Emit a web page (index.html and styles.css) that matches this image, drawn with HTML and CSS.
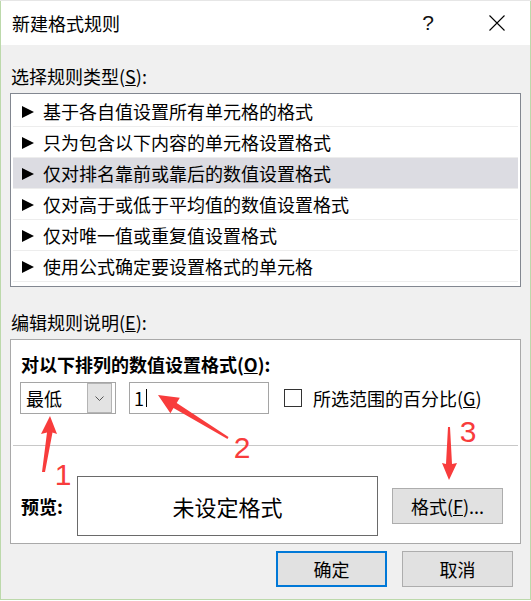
FILE: index.html
```html
<!DOCTYPE html>
<html lang="zh-CN">
<head>
<meta charset="utf-8">
<title>新建格式规则</title>
<link rel="stylesheet" href="styles.css">
</head>
<body>
<div class="topstrip"></div>
<div class="window">
  <div class="titlebar">
    <span class="title">新建格式规则</span>
    <span class="help">?</span>
    <svg class="close" width="16" height="16" viewBox="0 0 16 16"><path d="M0.5 0.5L15.5 15.5M15.5 0.5L0.5 15.5" stroke="#000" stroke-width="1.1" fill="none"/></svg>
  </div>
  <div class="content">
    <div class="label">选择规则类型(<u>S</u>):</div>
    <ul class="listbox">
      <li><span class="tri"></span>基于各自值设置所有单元格的格式</li>
      <li><span class="tri"></span>只为包含以下内容的单元格设置格式</li>
      <li class="sel"><span class="tri"></span>仅对排名靠前或靠后的数值设置格式</li>
      <li><span class="tri"></span>仅对高于或低于平均值的数值设置格式</li>
      <li><span class="tri"></span>仅对唯一值或重复值设置格式</li>
      <li><span class="tri"></span>使用公式确定要设置格式的单元格</li>
    </ul>
    <div class="label label2">编辑规则说明(<u>E</u>):</div>
    <div class="editbox">
      <div class="heading">对以下排列的数值设置格式(<u>O</u>):</div>
      <div class="controls">
        <div class="combo">
          <span class="combo-text">最低</span>
          <span class="combo-btn"><svg width="9" height="5" viewBox="0 0 9 5"><path d="M0.5 0.5L4.5 4.5L8.5 0.5" stroke="#555" stroke-width="1" fill="none"/></svg></span>
        </div>
        <div class="input"><span class="val">1</span><span class="caret"></span></div>
        <div class="check"><span class="box"></span><span>所选范围的百分比(<u>G</u>)</span></div>
      </div>
      <div class="sep"></div>
      <div class="preview-row">
        <span class="preview-label">预览:</span>
        <div class="preview">未设定格式</div>
        <div class="btn fmt">格式(<u>F</u>)...</div>
      </div>
    </div>
    <div class="actions">
      <div class="btn ok">确定</div>
      <div class="btn">取消</div>
    </div>
  </div>
</div>
<svg class="annot" width="531" height="601" viewBox="0 0 531 601">
  <g fill="#f83c3c">
    <polygon points="50,416 57,434 52.5,432.5 45,472 42,472 47,432.5 41,434"/>
    <polygon points="158,395 179.8,397.8 176.7,402.9 228.5,437.1 227.5,438.9 173.5,408.1 170.4,413.2"/>
    <polygon points="449,480 442,463 446,464 448,427 450,427 452,464 457,463"/>
    <text class="num" x="63" y="485" text-anchor="middle">1</text>
    <text class="num" x="242" y="458" text-anchor="middle">2</text>
    <text class="num" x="468" y="442" text-anchor="middle">3</text>
  </g>
</svg>
</body>
</html>
```

FILE: styles.css
```css
html, body {
  margin: 0;
  padding: 0;
}
body {
  position: relative;
  width: 531px;
  height: 601px;
  overflow: hidden;
  background: #ffffff;
  font-family: "Noto Sans CJK SC", "Noto Sans", sans-serif;
  font-size: 18px;
  color: #000;
}
.topstrip {
  height: 1px;
  background: #e6e6e6;
}
.window {
  width: 531px;
  height: 599px;
  box-sizing: border-box;
  border-left: 1px solid #bcd9ab;
  border-right: 1px solid #bcd9ab;
  border-bottom: 1px solid #bcd9ab;
  display: flex;
  flex-direction: column;
}
.titlebar {
  height: 44px;
  flex: none;
  background: #fff;
  display: flex;
  align-items: center;
  padding-left: 11px;
}
.title {
  line-height: 24px;
}
.help {
  margin-left: auto;
  margin-right: 55px;
  font-family: "Liberation Sans", sans-serif;
  font-size: 21px;
  line-height: 24px;
  color: #111;
}
.close {
  margin-right: 25px;
  display: block;
}
.content {
  flex: 1;
  background: #f0f0f0;
  padding: 19px 9px 0;
}
.label {
  line-height: 24px;
  height: 24px;
  padding-left: 1px;
}
.label2 {
  margin-top: 23px;
}
.listbox {
  list-style: none;
  margin: 5px 0 0;
  padding: 2px 2px 3px;
  height: 194px;
  box-sizing: border-box;
  border: 1px solid #828790;
  background: #fff;
}
.listbox li {
  height: 31px;
  box-sizing: border-box;
  border-bottom: 1px solid #ededed;
  display: flex;
  align-items: center;
  padding-left: 9px;
  line-height: 24px;
}
.listbox li.sel {
  background: #dcdce2;
}
.tri {
  width: 0;
  height: 0;
  border-left: 12px solid #000;
  border-top: 6px solid transparent;
  border-bottom: 6px solid transparent;
  margin-right: 9px;
  margin-top: 2px;
}
.editbox {
  margin-top: 5px;
  background: #fff;
  border: 1px solid #a9a9a9;
  padding: 12px 9px 7px;
}
.heading {
  font-weight: 700;
  line-height: 24px;
  height: 24px;
  padding-left: 1px;
}
.controls {
  margin-top: 6px;
  height: 32px;
  display: flex;
  align-items: center;
}
.combo {
  width: 96px;
  height: 32px;
  box-sizing: border-box;
  border: 1px solid #a5a5a5;
  display: flex;
  align-items: center;
  padding: 0 3px 0 5px;
}
.combo-btn {
  margin-left: auto;
  width: 25px;
  height: 30px;
  box-sizing: border-box;
  background: #e3e3e3;
  border: 1px solid #b4b4b4;
  display: flex;
  align-items: center;
  justify-content: center;
}
.combo-btn svg {
  display: block;
}
.input {
  margin-left: 13px;
  width: 140px;
  height: 32px;
  box-sizing: border-box;
  border: 1px solid #a5a5a5;
  display: flex;
  align-items: center;
  padding-left: 4px;
}
.caret {
  width: 1px;
  height: 18px;
  background: #000;
  margin-left: 2px;
}
.check {
  margin-left: 15px;
  display: flex;
  align-items: center;
}
.box {
  width: 18px;
  height: 18px;
  box-sizing: border-box;
  border: 1px solid #333;
  background: #fff;
  margin-right: 11px;
}
.sep {
  margin: 31px -7px 0;
  height: 1px;
  background: #c8c8c8;
}
.preview-row {
  margin-top: 30px;
  display: flex;
  align-items: center;
}
.preview-label {
  width: 57px;
  font-weight: 700;
  padding-left: 1px;
  box-sizing: border-box;
}
.preview {
  width: 301px;
  height: 60px;
  box-sizing: border-box;
  border: 1px solid #6a6a6a;
  display: flex;
  align-items: center;
  justify-content: center;
  font-size: 22px;
}
.btn {
  width: 111px;
  height: 36px;
  box-sizing: border-box;
  background: #e1e1e1;
  border: 1px solid #adadad;
  display: flex;
  align-items: center;
  justify-content: center;
  font-size: 18px;
}
.fmt {
  margin-left: 14px;
}
.actions {
  margin-top: 7px;
  display: flex;
  justify-content: flex-end;
  gap: 15px;
  padding-right: 8px;
}
.ok {
  border: 2px solid #0078d7;
}
.annot {
  position: absolute;
  top: 0;
  left: 0;
  pointer-events: none;
}
.num {
  font-family: "Liberation Sans", Arial, sans-serif;
  font-size: 30px;
}
```
